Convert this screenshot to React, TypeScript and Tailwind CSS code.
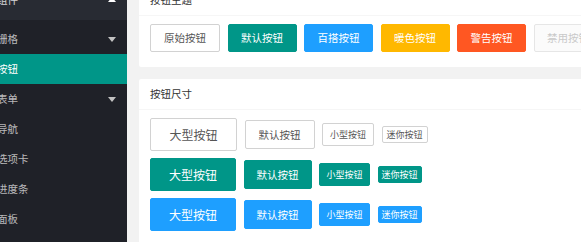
const font = { fontFamily: '"Noto Sans CJK SC", "Noto Sans", sans-serif' };

const menu = [
  { label: "栅格", caret: true },
  { label: "按钮", active: true },
  { label: "表单", caret: true },
  { label: "导航" },
  { label: "选项卡" },
  { label: "进度条" },
  { label: "面板" },
];

const themes = [
  { label: "原始按钮", cls: "w-[70px] bg-white border-[#d2d2d2] text-[#555]" },
  { label: "默认按钮", cls: "w-[69px] bg-[#009688] border-[#009688] text-white" },
  { label: "百搭按钮", cls: "w-[69px] bg-[#1E9FFF] border-[#1E9FFF] text-white" },
  { label: "暖色按钮", cls: "w-[69px] bg-[#FFB800] border-[#FFB800] text-white" },
  { label: "警告按钮", cls: "w-[69px] bg-[#FF5722] border-[#FF5722] text-white" },
  { label: "禁用按钮", cls: "w-[69px] bg-[#FBFBFB] border-[#e6e6e6] text-[#C9C9C9]" },
];

const sizeRows = [
  {
    color: "bg-white border-[#d2d2d2] text-[#555]",
    widths: ["w-[87px]", "w-[70px]", "w-[52px]", "w-[46px]"],
  },
  {
    color: "bg-[#009688] border-[#009688] text-white",
    widths: ["w-[86px]", "w-[68px]", "w-[51px]", "w-[44px]"],
  },
  {
    color: "bg-[#1E9FFF] border-[#1E9FFF] text-white",
    widths: ["w-[86px]", "w-[68px]", "w-[51px]", "w-[44px]"],
  },
];

const sizes = [
  { label: "大型按钮", cls: "h-[33px] text-[12px]" },
  { label: "默认按钮", cls: "h-[29px] text-[10.5px]" },
  { label: "小型按钮", cls: "h-[23px] text-[9px]" },
  { label: "迷你按钮", cls: "h-[17px] text-[9px]" },
];

function Caret() {
  return <span className="w-0 h-0 border-x-[4px] border-x-transparent border-t-[5px] border-t-[#c2c2c2]" />;
}

export default function App() {
  return (
    <div className="w-[581px] h-[242px] overflow-hidden flex bg-[#f2f2f2]" style={font}>
      {/* Sidebar */}
      <div className="w-[127px] shrink-0 h-full bg-[#1f2128] text-[10.5px]">
        <div className="h-[20px] bg-[#282b33] flex items-start justify-between overflow-hidden">
          <span className="-mt-[10px] -ml-[3px] leading-[20px] text-white/80">组件</span>
          <span className="-mt-[3px] mr-[11px] w-0 h-0 border-x-[4px] border-x-transparent border-b-[5px] border-b-white" />
        </div>
        <div className="pt-[4px]">
          {menu.map((m) => (
            <div
              key={m.label}
              className={`h-[30px] flex items-center justify-between pr-[11px] ${
                m.active ? "bg-[#009688] text-white" : "text-white/70"
              }`}
            >
              <span className="-ml-[3px]">{m.label}</span>
              {m.caret && <Caret />}
            </div>
          ))}
        </div>
      </div>

      {/* Main */}
      <div className="flex-1 overflow-hidden pl-[12px]">
        <div className="w-[480px] -mt-[15px] bg-white rounded-[2px]">
          <div className="h-[31px] flex items-center px-[11px] border-b border-[#f6f6f6] text-[10.5px] text-[#333]">
            按钮主题
          </div>
          <div className="pt-[8px] pb-[15px] px-[11px] flex gap-[7.5px]">
            {themes.map((t) => (
              <div
                key={t.label}
                className={`h-[28px] shrink-0 flex items-center justify-center border rounded-[2px] text-[10.5px] ${t.cls}`}
              >
                {t.label}
              </div>
            ))}
          </div>
        </div>

        <div className="w-[480px] mt-[12px] bg-white rounded-[2px]">
          <div className="h-[31px] flex items-center px-[11px] border-b border-[#f6f6f6] text-[10.5px] text-[#333]">
            按钮尺寸
          </div>
          <div className="pt-[8px] pb-[15px] px-[11px] flex flex-col gap-[7px]">
            {sizeRows.map((row, ri) => (
              <div key={ri} className="h-[33px] flex items-center gap-[7.5px]">
                {sizes.map((s, si) => (
                  <div
                    key={s.label}
                    className={`shrink-0 flex items-center justify-center border rounded-[2px] ${s.cls} ${row.widths[si]} ${row.color}`}
                  >
                    {s.label}
                  </div>
                ))}
              </div>
            ))}
          </div>
        </div>
      </div>
    </div>
  );
}
